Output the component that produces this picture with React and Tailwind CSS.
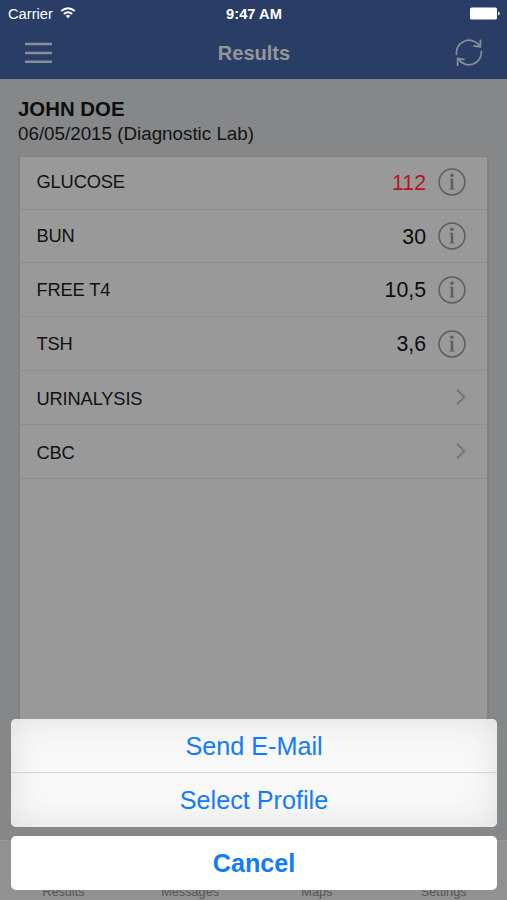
import { useState } from 'react'

const results = [
  { name: 'GLUCOSE', value: '112', alert: true },
  { name: 'BUN', value: '30' },
  { name: 'FREE T4', value: '10,5' },
  { name: 'TSH', value: '3,6' },
  { name: 'URINALYSIS' },
  { name: 'CBC' },
]

const tabs = ['Results', 'Messages', 'Maps', 'Settings']

function MenuIcon() {
  return (
    <svg width="27" height="22" viewBox="0 0 27 22" stroke="#85909a" strokeWidth="2.5">
      <path d="M0 2.1H27M0 10.9H27M0 19.8H27" />
    </svg>
  )
}

function WifiIcon() {
  return (
    <svg width="16" height="12" viewBox="0 0 16 12" fill="none" stroke="#fff" strokeWidth="1.9">
      <path d="M1.2 4.1Q8 -1.6 14.8 4.1" />
      <path d="M3.8 7Q8 3.4 12.2 7" />
      <path d="M8 11.3L5.7 8.8Q8 7 10.3 8.8Z" fill="#fff" stroke="none" />
    </svg>
  )
}

function BatteryIcon() {
  return (
    <svg width="30" height="13" viewBox="0 0 30 13" fill="#fff">
      <rect x="0" y="0.5" width="27" height="12" rx="1.5" />
      <path d="M28 4.8Q29.8 5 29.8 6.5Q29.8 8 28 8.2Z" />
    </svg>
  )
}

function RefreshIcon() {
  return (
    <svg width="28" height="28" viewBox="0 0 28 28" fill="none" stroke="#85909a" strokeWidth="1.7">
      <path d="M1.6 16A12.6 12.6 0 0 1 24.9 7.5" />
      <path d="M26.4 11.6A12.6 12.6 0 0 1 3.3 20" />
      <path d="M25.4 0.6V7.7L18.4 6.8" />
      <path d="M2.6 27V19.6L9.8 20.6" />
    </svg>
  )
}

function InfoIcon() {
  return (
    <svg width="28" height="28" viewBox="0 0 28 28" fill="none">
      <circle cx="14" cy="14" r="12.9" stroke="#5c5d5e" strokeWidth="1.5" />
      <circle cx="13.9" cy="7.2" r="1.7" fill="#5c5d5e" />
      <path d="M11.7 10.7H15.2V20.5L16.4 20.7V21.4H11.6V20.7L12.8 20.5V11.7L11.7 11.5Z" fill="#5c5d5e" />
    </svg>
  )
}

function Chevron() {
  return (
    <svg width="10" height="16" viewBox="0 0 10 16" fill="none" stroke="#757676" strokeWidth="2">
      <path d="M1 0.8L8.4 8L1 15.2" />
    </svg>
  )
}

function ResultRow({ item }) {
  return (
    <div className="flex h-[53.9px] items-center border-b border-[#8b8d8e] pl-[16.5px] pr-[21px]">
      <span className={`grow text-[18.3px] tracking-[-0.15px] text-[#111213] ${item.value ? '' : 'pt-[2px]'}`}>
        {item.name}
      </span>
      {item.value ? (
        <>
          <span className={`mr-3 pt-[3px] text-[21.3px] ${item.alert ? 'text-[#b5161b]' : 'text-[#0c0c0c]'}`}>
            {item.value}
          </span>
          <InfoIcon />
        </>
      ) : (
        <div className="pb-px">
          <Chevron />
        </div>
      )}
    </div>
  )
}

export default function App() {
  const [sheetOpen, setSheetOpen] = useState(true)
  const close = () => setSheetOpen(false)

  return (
    <div className="relative flex h-[900px] w-[507px] flex-col overflow-hidden bg-[#868788] font-['Liberation_Sans',Arial,sans-serif]">
      <header className="h-[79px] shrink-0 bg-[#2a3d66] text-white">
        {/* Status bar */}
        <div className="grid h-[27px] grid-cols-3 items-center pl-2 pr-[7px] text-[14.7px]">
          <div className="flex items-center gap-[7px]">
            <span className="pt-px">Carrier</span>
            <WifiIcon />
          </div>
          <div className="pt-px text-center font-bold">9:47 AM</div>
          <div className="flex justify-end">
            <BatteryIcon />
          </div>
        </div>

        {/* Nav bar */}
        <div className="grid h-[51px] grid-cols-3 items-center pl-[25px] pr-[24px]">
          <button className="flex" aria-label="Menu">
            <MenuIcon />
          </button>
          <h1 className="text-center text-[20px] font-bold text-[#929699]">Results</h1>
          <button className="flex justify-end" aria-label="Refresh">
            <RefreshIcon />
          </button>
        </div>
      </header>

      <main className="flex grow flex-col px-[18px] pt-[18px]">
        <h2 className="text-[20.4px] leading-6 font-bold text-[#0d0e0f]">JOHN DOE</h2>
        <p className="pt-px text-[18.8px] leading-6 text-[#121314]">06/05/2015 (Diagnostic Lab)</p>
        <div className="mt-[10px] h-[668px] border-x-2 border-t border-[#7f8182] bg-[#999999]">
          <div className="-mt-[1.3px]">
            {results.map((item) => (
              <ResultRow key={item.name} item={item} />
            ))}
          </div>
        </div>
      </main>

      <nav className="grid h-[60px] shrink-0 grid-cols-4 items-end border-t border-[#9a9a9a] bg-[#929191] text-center text-[12.7px] leading-4 text-[#555555]">
        {tabs.map((tab) => (
          <span key={tab}>{tab}</span>
        ))}
      </nav>

      {/* Action sheet */}
      {sheetOpen && (
        <div className="absolute right-[10px] bottom-[10px] left-[11px] flex flex-col gap-[9px] text-[25.2px] text-[#127bf6]">
          <div className="flex h-[108px] flex-col overflow-hidden rounded-[5px] bg-[#f8f8f8] shadow-[inset_0_0_32px_#dedede]">
            <button className="h-[54px] border-b border-[#d3d4d5] pt-0.5" onClick={close}>Send E-Mail</button>
            <button className="h-[54px] pt-0.5" onClick={close}>Select Profile</button>
          </div>
          <button className="h-[54px] rounded-[5px] bg-white pt-0.5 font-bold" onClick={close}>Cancel</button>
        </div>
      )}
    </div>
  )
}
